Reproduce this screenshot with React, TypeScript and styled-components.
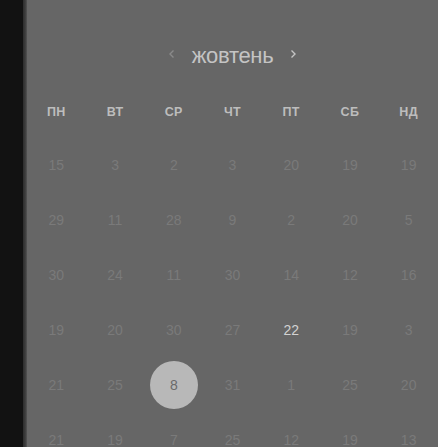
import React from "react";
import styled, { createGlobalStyle } from "styled-components";

const Global = createGlobalStyle`
  html, body { margin: 0; padding: 0; background: #121212; }
  body { font-family: "Liberation Sans", Arial, sans-serif; }
  #root { width: 438px; height: 447px; overflow: hidden; }
`;

const Screen = styled.div`
  display: flex;
  width: 438px;
  height: 447px;
  overflow: hidden;
  background: #121212;
`;

const Rail = styled.div`
  width: 23px;
  flex: none;
  background: #121212;
`;

const Edge = styled.div`
  width: 4px;
  flex: none;
  background: linear-gradient(to right, #2c2c2c, #3e3e3e 60%, #555);
`;

const Panel = styled.div`
  flex: 1;
  background: #666666;
  display: flex;
  flex-direction: column;
  padding-top: 36px;
  overflow: hidden;
`;

const Header = styled.div`
  flex: none;
  height: 40px;
  display: flex;
  align-items: center;
  justify-content: center;
  gap: 16px;
`;

const Month = styled.span`
  font-family: "Liberation Sans", Arial, sans-serif;
  font-size: 22px;
  color: #c4c4c4;
  letter-spacing: -0.3px;
  line-height: 1;
  padding-bottom: 1px;
`;

const Chevron = styled.svg<{ $dim?: boolean }>`
  width: 8px;
  height: 10px;
  margin-top: -4px;
  color: ${(p) => (p.$dim ? "#8a8a8a" : "#c4c4c4")};
`;

const Grid = styled.div`
  flex: none;
  margin-top: 10px;
  display: grid;
  grid-template-columns: repeat(7, 1fr);
  grid-auto-rows: 55px;
  grid-template-rows: 51px;
`;

const Weekday = styled.div`
  display: flex;
  align-items: center;
  justify-content: center;
  font-family: "Liberation Sans", Arial, sans-serif;
  font-weight: 700;
  font-size: 12.5px;
  color: #bdbdbd;
  letter-spacing: 0.3px;
`;

const Day = styled.div<{ $tone: "faint" | "bright" | "selected" }>`
  display: flex;
  align-items: center;
  justify-content: center;
  font-family: "Liberation Sans", Arial, sans-serif;
  font-size: 14px;
  color: ${(p) =>
    p.$tone === "bright" ? "#d2d2d2" : p.$tone === "selected" ? "#6a6a6a" : "#7a7a7a"};
`;

const Bubble = styled.span`
  width: 48px;
  height: 48px;
  border-radius: 50%;
  background: #b8b8b8;
  display: flex;
  align-items: center;
  justify-content: center;
`;

const weekdays = ["ПН", "ВТ", "СР", "ЧТ", "ПТ", "СБ", "НД"];

const rows: number[][] = [
  [15, 3, 2, 3, 20, 19, 19],
  [29, 11, 28, 9, 2, 20, 5],
  [30, 24, 11, 30, 14, 12, 16],
  [19, 20, 30, 27, 22, 19, 3],
  [21, 25, 8, 31, 1, 25, 20],
  [21, 19, 7, 25, 12, 19, 13],
];

export default function App() {
  return (
    <>
      <Global />
      <Screen>
        <Rail />
        <Edge />
        <Panel>
          <Header>
            <Chevron $dim viewBox="0 0 8 10">
              <path d="M5.5 1.5 L2 5 L5.5 8.5" fill="none" stroke="currentColor" strokeWidth="1.4" />
            </Chevron>
            <Month>жовтень</Month>
            <Chevron viewBox="0 0 8 10">
              <path d="M2.5 1.5 L6 5 L2.5 8.5" fill="none" stroke="currentColor" strokeWidth="1.4" />
            </Chevron>
          </Header>
          <Grid>
            {weekdays.map((w) => (
              <Weekday key={w}>{w}</Weekday>
            ))}
            {rows.map((r, ri) =>
              r.map((d, ci) => {
                const selected = ri === 4 && ci === 2;
                const bright = ri === 3 && ci === 4;
                return (
                  <Day key={`${ri}-${ci}`} $tone={selected ? "selected" : bright ? "bright" : "faint"}>
                    {selected ? <Bubble>{d}</Bubble> : d}
                  </Day>
                );
              })
            )}
          </Grid>
        </Panel>
      </Screen>
    </>
  );
}
